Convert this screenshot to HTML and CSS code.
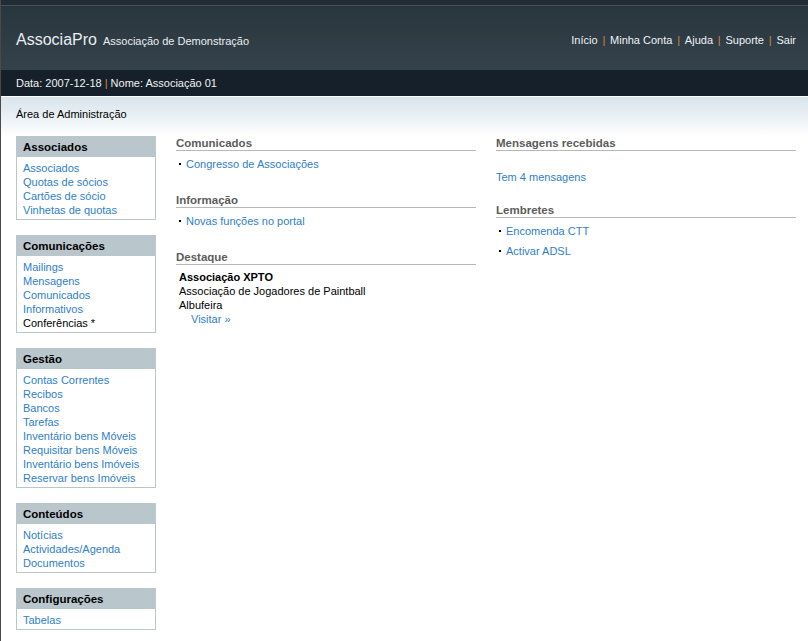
FILE: index.html
```html
<!DOCTYPE html>
<html lang="pt">
<head>
<meta charset="utf-8">
<title>AssociaPro</title>
<link rel="stylesheet" href="styles.css">
</head>
<body>
<div class="topstrip"></div>
<header class="header">
  <div class="brand"><span class="logo">AssociaPro</span><span class="org">Associação de Demonstração</span></div>
  <nav class="nav">
    <a href="#">Início</a><span class="sep">|</span><a href="#">Minha Conta</a><span class="sep">|</span><a href="#">Ajuda</a><span class="sep">|</span><a href="#">Suporte</a><span class="sep">|</span><a href="#">Sair</a>
  </nav>
</header>
<div class="infobar">Data: 2007-12-18 <span class="sep2">|</span> Nome: Associação 01</div>
<div class="crumb">Área de Administração</div>
<div class="main">
  <aside class="sidebar">
    <div class="box">
      <div class="box-title">Associados</div>
      <ul class="box-list">
        <li><a href="#">Associados</a></li>
        <li><a href="#">Quotas de sócios</a></li>
        <li><a href="#">Cartões de sócio</a></li>
        <li><a href="#">Vinhetas de quotas</a></li>
      </ul>
    </div>
    <div class="box">
      <div class="box-title">Comunicações</div>
      <ul class="box-list">
        <li><a href="#">Mailings</a></li>
        <li><a href="#">Mensagens</a></li>
        <li><a href="#">Comunicados</a></li>
        <li><a href="#">Informativos</a></li>
        <li>Conferências *</li>
      </ul>
    </div>
    <div class="box">
      <div class="box-title">Gestão</div>
      <ul class="box-list">
        <li><a href="#">Contas Correntes</a></li>
        <li><a href="#">Recibos</a></li>
        <li><a href="#">Bancos</a></li>
        <li><a href="#">Tarefas</a></li>
        <li><a href="#">Inventário bens Móveis</a></li>
        <li><a href="#">Requisitar bens Móveis</a></li>
        <li><a href="#">Inventário bens Imóveis</a></li>
        <li><a href="#">Reservar bens Imóveis</a></li>
      </ul>
    </div>
    <div class="box">
      <div class="box-title">Conteúdos</div>
      <ul class="box-list">
        <li><a href="#">Notícias</a></li>
        <li><a href="#">Actividades/Agenda</a></li>
        <li><a href="#">Documentos</a></li>
      </ul>
    </div>
    <div class="box">
      <div class="box-title">Configurações</div>
      <ul class="box-list">
        <li><a href="#">Tabelas</a></li>
      </ul>
    </div>
  </aside>
  <section class="col">
    <div class="section">
      <h2 class="sec-title">Comunicados</h2>
      <ul class="bullets">
        <li><a href="#">Congresso de Associações</a></li>
      </ul>
    </div>
    <div class="section">
      <h2 class="sec-title">Informação</h2>
      <ul class="bullets">
        <li><a href="#">Novas funções no portal</a></li>
      </ul>
    </div>
    <div class="section">
      <h2 class="sec-title">Destaque</h2>
      <div class="highlight">
        <div class="hl-name">Associação XPTO</div>
        <div>Associação de Jogadores de Paintball</div>
        <div>Albufeira</div>
        <div class="hl-link"><a href="#">Visitar »</a></div>
      </div>
    </div>
  </section>
  <section class="col">
    <div class="section">
      <h2 class="sec-title">Mensagens recebidas</h2>
      <p class="msg"><a href="#">Tem 4 mensagens</a></p>
    </div>
    <div class="section">
      <h2 class="sec-title">Lembretes</h2>
      <ul class="bullets spaced">
        <li><a href="#">Encomenda CTT</a></li>
        <li><a href="#">Activar ADSL</a></li>
      </ul>
    </div>
  </section>
</div>
</body>
</html>
```

FILE: styles.css
```css
* { box-sizing: border-box; }
html, body { margin: 0; padding: 0; }
body {
  min-height: 100vh;
  background: #ffffff;
  border-left: 1px solid #4a4a4a;
  font-family: "Liberation Sans", Arial, sans-serif;
  font-size: 11px;
  line-height: 14px;
  color: #000;
}
a { color: #2f80c8; text-decoration: none; }
ul { list-style: none; margin: 0; padding: 0; }
h2, p { margin: 0; }

.topstrip {
  height: 6px;
  background: #222c34;
  border-bottom: 1px solid #46525a;
}
.header {
  height: 64px;
  background: linear-gradient(to bottom, #2a363e 0%, #34424b 100%);
  display: flex;
  align-items: center;
  justify-content: space-between;
  padding: 4px 12px 0 15px;
}
.brand { display: flex; align-items: baseline; color: #e9eef1; }
.logo { font-size: 16px; margin-right: 6px; }
.org { font-size: 11px; }
.nav { display: flex; align-items: center; font-size: 11px; }
.nav a { color: #eef2f5; }
.nav .sep { color: #c98b47; margin: 0 4.8px; }

.infobar {
  height: 27px;
  background: #16202a;
  color: #f0f3f5;
  line-height: 26px;
  padding-left: 15px;
  border-bottom: 1px solid #ffffff;
}
.sep2 { color: #c98b47; }

.crumb {
  height: 39px;
  padding: 10px 0 0 15px;
  background: linear-gradient(to bottom, #d8e4ec 0%, #eef3f6 60%, #ffffff 100%);
}

.main {
  display: flex;
  align-items: flex-start;
  gap: 20px;
  padding: 0 12px 0 15px;
}
.sidebar { width: 140px; flex: none; }
.box {
  border: 1px solid #b9c6cc;
  margin-bottom: 15px;
}
.box:last-child { margin-bottom: 0; }
.box-title {
  height: 20px;
  line-height: 20px;
  background: #b9c6cc;
  font-size: 11.5px;
  font-weight: bold;
  padding-left: 6px;
  color: #000;
}
.box-list { padding: 4px 6px 2px; }

.col { width: 300px; flex: none; }
.sec-title {
  font-size: 11.5px;
  font-weight: bold;
  color: #5c5c5c;
  line-height: 14px;
  border-bottom: 1px solid #b8b8b8;
}
.section { margin-bottom: 22px; }
.bullets { margin-top: 6px; padding-left: 3px; }
.bullets li::before {
  content: "";
  display: inline-block;
  width: 2px;
  height: 2px;
  background: #000;
  margin-right: 5px;
  vertical-align: 3px;
}
.bullets.spaced li + li { margin-top: 6px; }
.highlight { margin-top: 5px; padding-left: 3px; }
.hl-name { font-weight: bold; }
.hl-link { padding-left: 12px; }
.msg { margin-top: 19px; margin-bottom: -3px; }
```
